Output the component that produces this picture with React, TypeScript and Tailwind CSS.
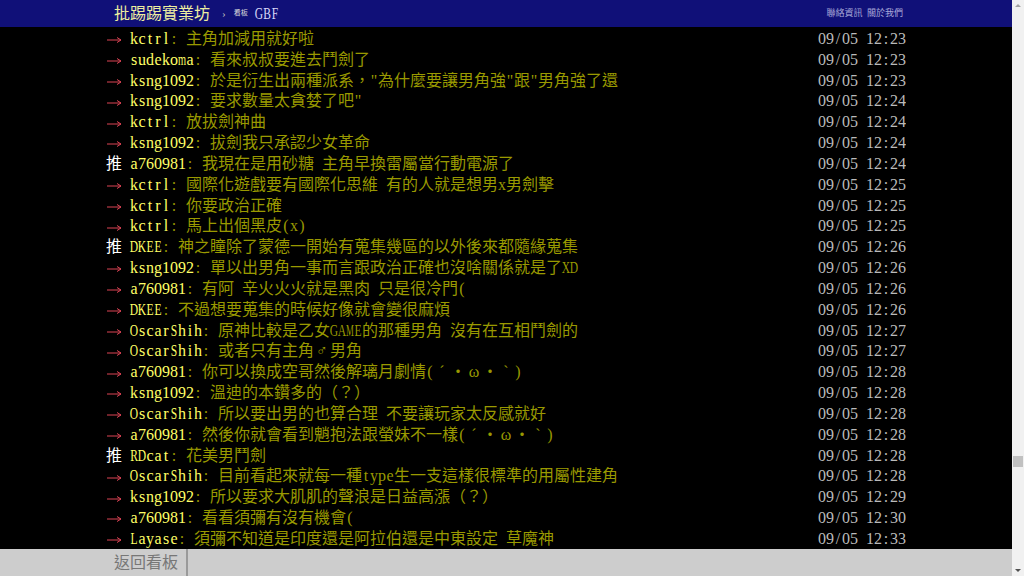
import type { ReactNode } from 'react';

type Push = { tag: '推' | '→'; user: string; content: string; time: string };

const pushes: Push[] = [
  { tag: '→', user: 'kctrl', content: '主角加減用就好啦', time: '09/05 12:23' },
  { tag: '→', user: 'sudekoma', content: '看來叔叔要進去鬥劍了', time: '09/05 12:23' },
  { tag: '→', user: 'ksng1092', content: '於是衍生出兩種派系，"為什麼要讓男角強"跟"男角強了還', time: '09/05 12:23' },
  { tag: '→', user: 'ksng1092', content: '要求數量太貪婪了吧"', time: '09/05 12:24' },
  { tag: '→', user: 'kctrl', content: '放拔劍神曲', time: '09/05 12:24' },
  { tag: '→', user: 'ksng1092', content: '拔劍我只承認少女革命', time: '09/05 12:24' },
  { tag: '推', user: 'a760981', content: '我現在是用砂糖 主角早換雷屬當行動電源了', time: '09/05 12:24' },
  { tag: '→', user: 'kctrl', content: '國際化遊戲要有國際化思維 有的人就是想男x男劍擊', time: '09/05 12:25' },
  { tag: '→', user: 'kctrl', content: '你要政治正確', time: '09/05 12:25' },
  { tag: '→', user: 'kctrl', content: '馬上出個黑皮(x)', time: '09/05 12:25' },
  { tag: '推', user: 'DKEE', content: '神之瞳除了蒙德一開始有蒐集幾區的以外後來都隨緣蒐集', time: '09/05 12:26' },
  { tag: '→', user: 'ksng1092', content: '單以出男角一事而言跟政治正確也沒啥關係就是了XD', time: '09/05 12:26' },
  { tag: '→', user: 'a760981', content: '有阿 辛火火火就是黑肉 只是很冷門(', time: '09/05 12:26' },
  { tag: '→', user: 'DKEE', content: '不過想要蒐集的時候好像就會變很麻煩', time: '09/05 12:26' },
  { tag: '→', user: 'OscarShih', content: '原神比較是乙女GAME的那種男角 沒有在互相鬥劍的', time: '09/05 12:27' },
  { tag: '→', user: 'OscarShih', content: '或者只有主角♂男角', time: '09/05 12:27' },
  { tag: '→', user: 'a760981', content: '你可以換成空哥然後解璃月劇情(ˊ・ω・ˋ)', time: '09/05 12:28' },
  { tag: '→', user: 'ksng1092', content: '溫迪的本鑽多的（？）', time: '09/05 12:28' },
  { tag: '→', user: 'OscarShih', content: '所以要出男的也算合理 不要讓玩家太反感就好', time: '09/05 12:28' },
  { tag: '→', user: 'a760981', content: '然後你就會看到魈抱法跟螢妹不一樣(ˊ・ω・ˋ)', time: '09/05 12:28' },
  { tag: '推', user: 'RDcat', content: '花美男鬥劍', time: '09/05 12:28' },
  { tag: '→', user: 'OscarShih', content: '目前看起來就每一種type生一支這樣很標準的用屬性建角', time: '09/05 12:28' },
  { tag: '→', user: 'ksng1092', content: '所以要求大肌肌的聲浪是日益高漲（？）', time: '09/05 12:29' },
  { tag: '→', user: 'a760981', content: '看看須彌有沒有機會(', time: '09/05 12:30' },
  { tag: '→', user: 'Layase', content: '須彌不知道是印度還是阿拉伯還是中東設定 草魔神', time: '09/05 12:33' },
];

// squeeze wide latin glyphs so they fit a half cell, like the terminal font does
const cellClass = (ch: string) => {
  if (ch.charCodeAt(0) >= 128) return 'inline-flex w-[16px] justify-center';
  if (ch === 'M' || ch === 'W') return 'inline-flex w-[8px] justify-center scale-x-[0.55]';
  if (ch === 'm' || ch === 'w') return 'inline-flex w-[8px] justify-center scale-x-[0.65]';
  if (/[A-Z]/.test(ch)) return 'inline-flex w-[8px] justify-center scale-x-[0.72]';
  return 'inline-flex w-[8px] justify-center';
};

const Cells = ({ text }: { text: string }): ReactNode =>
  Array.from(text).map((ch, i) => (
    <span key={i} className={cellClass(ch)}>
      {ch === ' ' ? '\u00a0' : ch}
    </span>
  ));

const Arrow = () => (
  <svg width="16" height="16" viewBox="0 0 16 16" className="inline-block">
    <path d="M1 8H15" stroke="#dd4455" strokeWidth="1" />
    <path d="M11 5.5L15 8L11 10.5" stroke="#dd4455" strokeWidth="1" fill="none" />
  </svg>
);

const PushRow = ({ push }: { push: Push }) => (
  <div className="flex h-[20.83px] items-baseline justify-between overflow-hidden whitespace-nowrap leading-[20.83px]">
    <span>
      {push.tag === '推' ? (
        <span className="text-white">
          <Cells text="推" />
        </span>
      ) : (
        <Arrow />
      )}
      <Cells text=" " />
      <span className="text-[#ff6]">
        <Cells text={push.user} />
      </span>
      <span className="text-[#990]">
        <Cells text={': ' + push.content} />
      </span>
    </span>
    <span className="text-[#bbb]">
      <Cells text={push.time} />
    </span>
  </div>
);

export default function App() {
  return (
    <div className="flex h-[576px] w-[1024px] overflow-hidden bg-black font-['Liberation_Serif','Noto_Sans_CJK_TC',serif] text-[16px]">
      <div className="flex min-w-0 flex-1 flex-col">
        <div className="h-[27px] shrink-0 bg-[#101078]">
          <div className="mx-auto flex h-full w-[800px] items-center pl-2 pr-[3px]">
            <span className="text-[16px] text-[#eeeea0]">批踢踢實業坊</span>
            <span className="ml-[12px] text-[11px] text-[#bbb]">›</span>
            <span className="ml-[8px] text-[7px] text-[#ddd]">看板</span>
            <span className="ml-[7px] text-[#d8d8f8]">
              <Cells text="GBF" />
            </span>
            <span className="ml-auto text-[9px] text-[#a8a8d8]">聯絡資訊&nbsp;&nbsp;關於我們</span>
          </div>
        </div>
        <div className="flex-1 overflow-hidden pt-[2px]">
          <div className="mx-auto w-[800px]">
            {pushes.map((p, i) => (
              <PushRow key={i} push={p} />
            ))}
          </div>
        </div>
        <div className="h-[27px] shrink-0 bg-[#cdcdcd]">
          <div className="mx-auto flex h-full w-[800px]">
            <span className="flex h-full items-center border-r-2 border-[#9a9a9a] px-2 text-[#777]">
              <Cells text="返回看板" />
            </span>
          </div>
        </div>
      </div>
      <div className="flex w-[12px] shrink-0 flex-col items-center bg-[#f1f1f1]">
        <div className="mt-[4px] h-0 w-0 border-x-[3px] border-b-[3px] border-x-transparent border-b-[#a3a3a3]" />
        <div className="mt-[449px] h-[11px] w-[10px] bg-[#c1c1c1]" />
        <div className="flex-1" />
        <div className="mb-[4px] h-0 w-0 border-x-[3px] border-t-[3px] border-x-transparent border-t-[#505050]" />
      </div>
    </div>
  );
}
